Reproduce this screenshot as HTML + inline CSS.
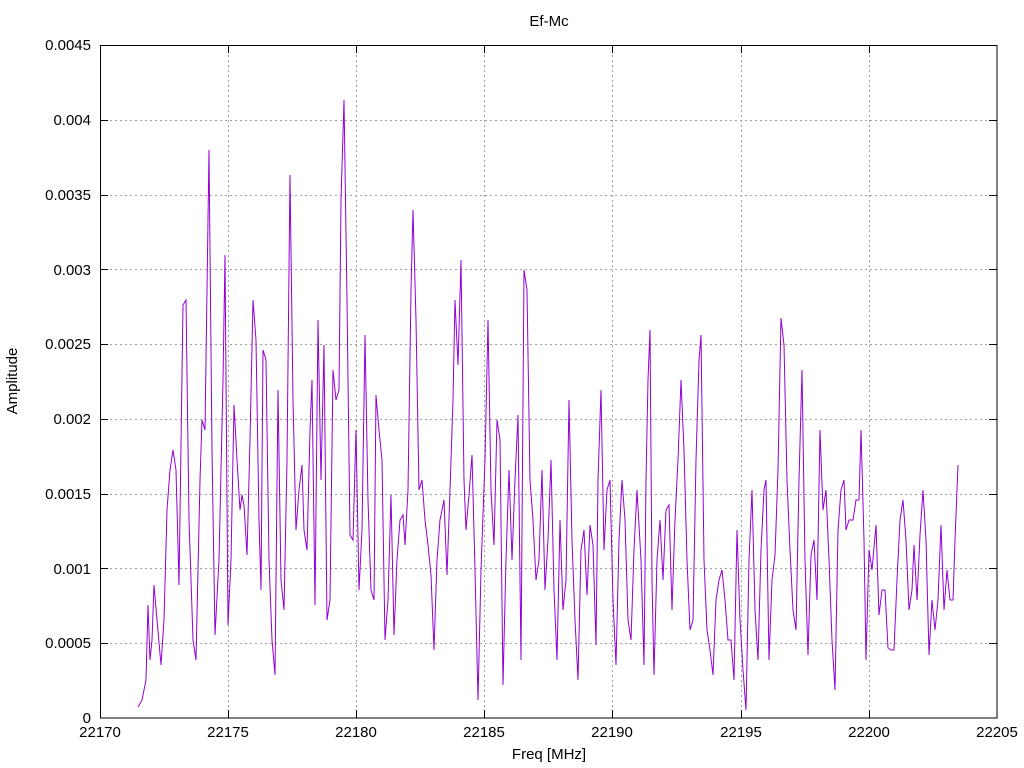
<!DOCTYPE html>
<html><head><meta charset="utf-8"><style>
html,body{margin:0;padding:0;background:#fff;}
svg{display:block;font-family:"Liberation Sans",sans-serif;}
</style></head><body>
<svg width="1024" height="768" viewBox="0 0 1024 768" xmlns="http://www.w3.org/2000/svg">
<rect width="1024" height="768" fill="#fff"/>
<g stroke="#a0a0a0" stroke-width="1" stroke-dasharray="2,3">
<line x1="228.5" y1="45" x2="228.5" y2="718"/>
<line x1="356.5" y1="45" x2="356.5" y2="718"/>
<line x1="484.5" y1="45" x2="484.5" y2="718"/>
<line x1="612.5" y1="45" x2="612.5" y2="718"/>
<line x1="741.5" y1="45" x2="741.5" y2="718"/>
<line x1="869.5" y1="45" x2="869.5" y2="718"/>
<line x1="100" y1="643.5" x2="997" y2="643.5"/>
<line x1="100" y1="568.5" x2="997" y2="568.5"/>
<line x1="100" y1="494.5" x2="997" y2="494.5"/>
<line x1="100" y1="419.5" x2="997" y2="419.5"/>
<line x1="100" y1="344.5" x2="997" y2="344.5"/>
<line x1="100" y1="269.5" x2="997" y2="269.5"/>
<line x1="100" y1="195.5" x2="997" y2="195.5"/>
<line x1="100" y1="120.5" x2="997" y2="120.5"/>
</g>
<g stroke="#000" stroke-width="1">
<path d="M228.5 718v-8M356.5 718v-8M484.5 718v-8M612.5 718v-8M741.5 718v-8M869.5 718v-8M228.5 45v8M356.5 45v8M484.5 45v8M612.5 45v8M741.5 45v8M869.5 45v8"/>
<path d="M100 643.5h8M100 568.5h8M100 494.5h8M100 419.5h8M100 344.5h8M100 269.5h8M100 195.5h8M100 120.5h8M997 643.5h-8M997 568.5h-8M997 494.5h-8M997 419.5h-8M997 344.5h-8M997 269.5h-8M997 195.5h-8M997 120.5h-8"/>
<rect x="100.5" y="45.5" width="896.5" height="672.5" fill="none"/>
</g>
<polyline fill="none" stroke="#9400d3" stroke-width="1" points="138,707 142,700 146,680 148,605 150,660 152,640 154,585 157,620 161,665 164,620 167,510 170,470 173,450 176,470 179,585 183,305 186,300 189,520 193,640 196,660 200,480 202,420 205,430 209,150 212,450 215,635 219,560 223,380 225,255 228,625 231,560 234,405 237,460 240,510 242,495 244,505 247,555 250,440 253,300 256,340 259,520 261,590 263,350 266,360 269,560 272,640 275,675 278,390 281,580 284,610 287,460 290,175 293,400 296,530 299,490 302,465 304,530 307,550 310,430 312,380 315,605 318,320 321,480 324,345 327,620 330,600 333,370 336,400 339,390 341,200 344,100 347,300 350,535 353,540 356,430 359,590 362,530 365,335 368,500 371,590 374,600 376,395 379,430 382,460 385,640 388,600 391,495 394,635 397,560 400,520 403,515 405,545 408,490 411,290 413,210 416,320 419,490 422,480 425,520 428,545 431,575 434,650 437,560 440,520 444,500 447,575 450,490 453,400 455,300 458,365 461,260 464,480 466,530 469,495 472,455 475,570 478,700 481,570 485,460 488,320 491,490 494,545 497,420 500,440 503,685 506,560 509,470 512,560 515,480 518,415 521,660 524,270 527,290 530,480 533,520 536,580 539,560 542,470 545,590 548,540 551,460 554,590 557,660 560,520 563,610 566,580 569,400 572,540 575,620 578,680 581,550 584,530 587,595 590,525 593,545 596,645 598,480 601,390 604,550 607,490 610,480 613,600 616,665 619,540 622,480 625,520 628,620 631,640 634,550 637,490 641,560 644,665 646,480 648,380 650,330 652,580 654,675 657,560 660,520 663,580 666,510 669,505 672,610 675,520 678,460 681,380 684,450 687,560 690,630 693,620 696,460 699,360 701,335 704,560 707,630 710,650 713,675 716,600 719,580 722,570 725,600 728,640 731,640 734,680 737,530 740,620 743,670 746,710 749,560 752,490 755,610 758,660 761,550 764,490 766,480 769,660 772,580 775,555 778,470 781,318 784,345 787,480 790,550 793,610 796,630 799,480 802,370 805,560 808,655 811,555 814,540 817,600 820,430 823,510 826,490 829,560 832,640 835,690 838,530 841,490 844,480 846,530 849,520 853,520 856,500 859,500 861,430 864,540 866,660 869,550 872,570 876,525 879,615 882,590 885,590 888,648 891,650 894,650 897,580 900,520 903,500 906,540 909,610 912,590 914,545 917,600 920,535 923,490 926,540 929,655 932,600 935,630 938,600 941,525 944,610 947,570 950,600 953,600 955,540 958,465"/>
<g font-size="15" fill="#000" text-anchor="end">
<text x="91" y="723">0</text>
<text x="91" y="648">0.0005</text>
<text x="91" y="574">0.001</text>
<text x="91" y="499">0.0015</text>
<text x="91" y="424">0.002</text>
<text x="91" y="349">0.0025</text>
<text x="91" y="275">0.003</text>
<text x="91" y="200">0.0035</text>
<text x="91" y="125">0.004</text>
<text x="91" y="50">0.0045</text>
</g>
<g font-size="15" fill="#000" text-anchor="middle">
<text x="100" y="737">22170</text>
<text x="228" y="737">22175</text>
<text x="356" y="737">22180</text>
<text x="484" y="737">22185</text>
<text x="612" y="737">22190</text>
<text x="741" y="737">22195</text>
<text x="869" y="737">22200</text>
<text x="997" y="737">22205</text>
<text x="549" y="759">Freq [MHz]</text>
<text x="549" y="26">Ef-Mc</text>
<text x="0" y="0" transform="translate(17,381) rotate(-90)">Amplitude</text>
</g>
</svg>
</body></html>
